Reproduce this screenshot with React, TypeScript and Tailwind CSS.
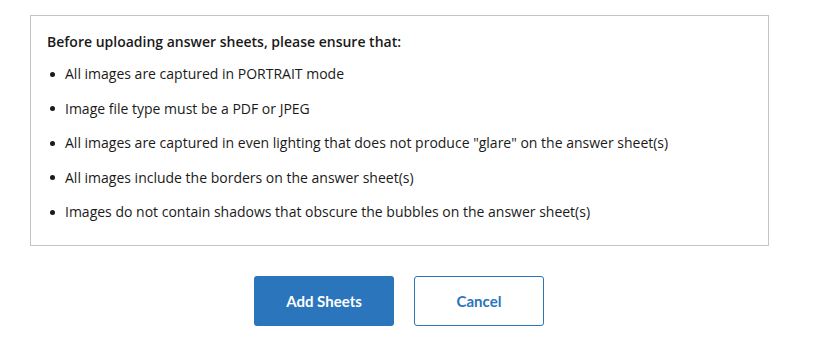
const items = [
  "All images are captured in PORTRAIT mode",
  "Image file type must be a PDF or JPEG",
  'All images are captured in even lighting that does not produce "glare" on the answer sheet(s)',
  "All images include the borders on the answer sheet(s)",
  "Images do not contain shadows that obscure the bubbles on the answer sheet(s)",
];

export default function App() {
  return (
    <div className="w-[818px] h-[342px] bg-white pt-[15px] pl-[30px] font-['Open_Sans',sans-serif]">
      <div className="w-[739px] h-[231px] border border-[#c4c4c4] pl-[16px] pt-[16px]">
        <p className="text-[14px] font-semibold text-[#1a1a1a] leading-[20px]">
          Before uploading answer sheets, please ensure that:
        </p>
        <ul className="mt-[12px] flex flex-col gap-[14.5px]">
          {items.map((t) => (
            <li key={t} className="flex items-center text-[14px] text-[#1a1a1a] leading-[20px]">
              <span className="ml-[3px] mr-[10px] w-[5px] h-[5px] rounded-full bg-[#1a1a1a]" />
              {t}
            </li>
          ))}
        </ul>
      </div>
      <div className="flex justify-center gap-[20px] mt-[30px] mr-[50px]">
        <button className="w-[140px] h-[50px] rounded-[3px] bg-[#2a75bb] text-white text-[15px] font-bold font-['Lato',sans-serif]">
          Add Sheets
        </button>
        <button className="w-[130px] h-[50px] rounded-[3px] border border-[#2a75bb] bg-white text-[#2a75bb] text-[15px] font-bold font-['Lato',sans-serif]">
          Cancel
        </button>
      </div>
    </div>
  );
}
